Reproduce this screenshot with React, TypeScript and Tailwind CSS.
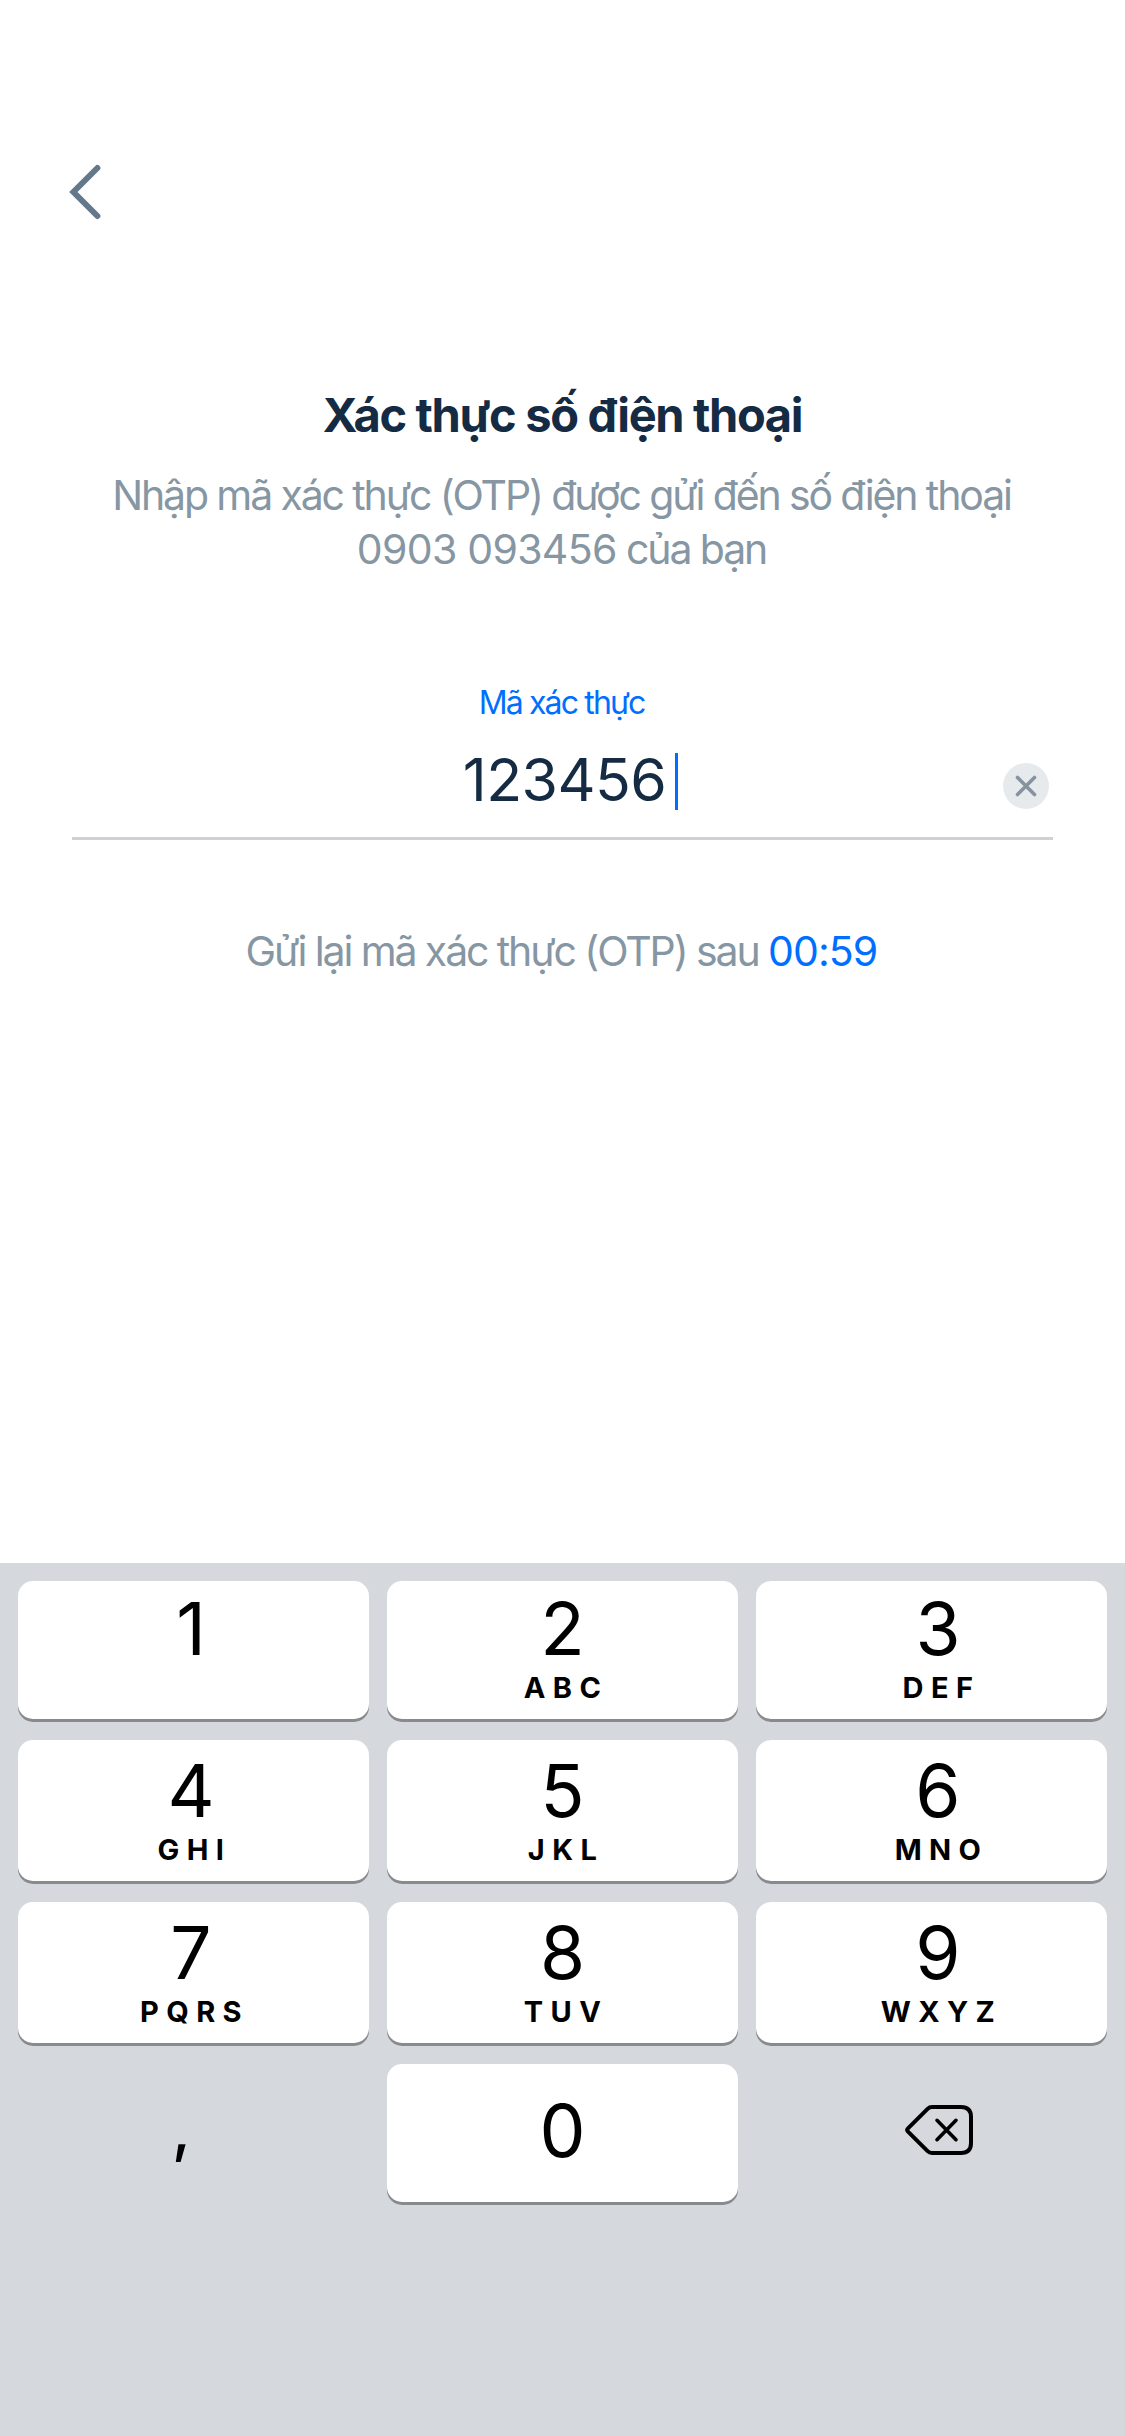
import React from 'react';

type KeyDef = { digit: string; letters: string };

const rows: KeyDef[][] = [
  [
    { digit: '1', letters: '' },
    { digit: '2', letters: 'ABC' },
    { digit: '3', letters: 'DEF' },
  ],
  [
    { digit: '4', letters: 'GHI' },
    { digit: '5', letters: 'JKL' },
    { digit: '6', letters: 'MNO' },
  ],
  [
    { digit: '7', letters: 'PQRS' },
    { digit: '8', letters: 'TUV' },
    { digit: '9', letters: 'WXYZ' },
  ],
];

const rowStyles = ['h-[138px] pt-[12px]', 'h-[141px] pt-[15px]', 'h-[141px] pt-[15px]'];
const colStyles = ['pr-[5px]', '', 'pl-[13px]'];

const BackIcon: React.FC = () => (
  <svg width="40" height="60" viewBox="0 0 40 60" fill="none" stroke="#64788b" strokeWidth="6" strokeLinecap="round">
    <path d="M31.4 6L7.4 30L31.4 54" />
  </svg>
);

const ClearIcon: React.FC = () => (
  <svg width="46" height="46" viewBox="0 0 46 46" fill="none">
    <circle cx="23" cy="23" r="23" fill="#e7eaed" />
    <path d="M14.5 14.5L31.5 31.5M31.5 14.5L14.5 31.5" stroke="#8593a1" strokeWidth="3.6" strokeLinecap="round" />
  </svg>
);

const BackspaceIcon: React.FC = () => (
  <svg width="68" height="50" viewBox="0 0 68 50" fill="none" stroke="#000" strokeWidth="4" strokeLinecap="round" strokeLinejoin="round">
    <path d="M27 2H56Q66 2 66 12V38Q66 48 56 48H27Q24.5 48 22.6 46.1L3 26.6Q1.4 25 3 23.4L22.6 3.9Q24.5 2 27 2Z" />
    <path d="M32 15.3L51 34.7M51 15.3L32 34.7" strokeWidth="3.6" />
  </svg>
);

const Keypad: React.FC = () => (
  <div className="mt-auto h-[873px] bg-[#d5d8dd] p-[18px] text-black">
    <div className="flex flex-col gap-[21px]">
      {rows.map((row, r) => (
        <div key={r} className="grid grid-cols-3 gap-[18px]">
          {row.map((item, c) => (
            <button
              key={item.digit}
              className={`flex flex-col items-center rounded-[15px] bg-white shadow-[0_3px_0_#898a8d] ${rowStyles[r]} ${colStyles[c]}`}
            >
              <span className="text-[73px] leading-[72px]">{item.digit}</span>
              <span className="mt-[8px] pl-[7px] text-[29px] leading-[30px] font-bold tracking-[7.4px] whitespace-nowrap">
                {item.letters}
              </span>
            </button>
          ))}
        </div>
      ))}
      <div className="grid grid-cols-3 gap-[18px]">
        <button className="flex h-[138px] justify-center pt-[29px] pr-[24px] text-[62px] leading-[72px] font-medium">,</button>
        <button className="flex h-[138px] justify-center rounded-[15px] bg-white pt-[31px] text-[73px] leading-[72px] shadow-[0_3px_0_#898a8d]">
          0
        </button>
        <button className="flex h-[138px] justify-center pt-[41px] pl-[15px]">
          <BackspaceIcon />
        </button>
      </div>
    </div>
  </div>
);

const App: React.FC = () => {
  return (
    <div className="flex h-[2436px] w-[1125px] flex-col bg-white font-['Inter',sans-serif]">
      <header className="h-[385px] pt-[162px] pl-[66px]">
        <button className="block">
          <BackIcon />
        </button>
      </header>

      <main className="flex flex-col px-[72px] text-center whitespace-nowrap">
        <h1 className="text-[47px] leading-[60px] font-bold tracking-[-1.35px] text-[#152b44]">Xác thực số điện thoại</h1>
        <p className="mt-[23px] pr-[2px] text-[41px] leading-[54px] tracking-[-2.12px] text-[#8696a3]">
          Nhập mã xác thực (OTP) được gửi đến số điện thoại
          <br />
          <span className="tracking-[-0.7px]">0903 093456</span> của bạn
        </p>

        <label className="mt-[107px] pr-[2px] text-[32px] leading-[40px] tracking-[-1.85px] text-[#006fff]">Mã xác thực</label>
        <div className="flex h-[117px] items-start border-b-[3px] border-[#cfd1d6] pt-[21px]">
          <div className="w-[46px]" />
          <div className="flex flex-1 justify-center pl-[20px]">
            <span className="text-[59px] leading-[72px] tracking-[-0.6px] text-[#152b44]">123456</span>
            <span className="mt-[9px] ml-[9px] h-[57px] w-[3px] bg-[#006fff]" />
          </div>
          <button className="mt-[19px] mr-[4px]">
            <ClearIcon />
          </button>
        </div>

        <p className="mt-[84px] pr-[2px] text-[41px] leading-[54px] tracking-[-2.1px] text-[#8696a3]">
          Gửi lại mã xác thực (OTP) sau <span className="tracking-[-0.9px] text-[#006fff]">00:59</span>
        </p>
      </main>

      <Keypad />
    </div>
  );
};

export default App;
